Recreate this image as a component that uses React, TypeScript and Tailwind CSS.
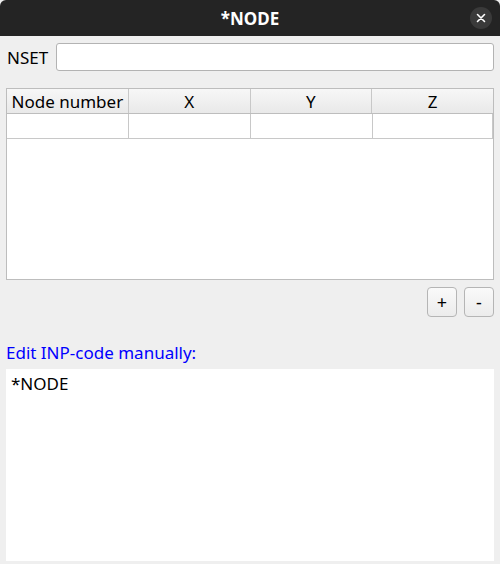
import React from 'react'

const font = { fontFamily: '"Noto Sans", "DejaVu Sans", sans-serif' }

export default function App() {
  const cols = ['Node number', 'X', 'Y', 'Z']

  return (
    <div className="w-[500px] h-[564px] bg-[#efefef] flex flex-col overflow-hidden" style={font}>
      {/* Title bar */}
      <div className="h-[36px] bg-[#242424] rounded-t-[6px] flex items-center justify-center relative shrink-0">
        <span className="text-white font-bold text-[17px] leading-none">*NODE</span>
        <button className="absolute right-[8px] top-[7px] w-[22px] h-[22px] rounded-full bg-[#3a3a3a] flex items-center justify-center">
          <svg width="10" height="10" viewBox="0 0 10 10">
            <path d="M1.5 1.5 L8.5 8.5 M8.5 1.5 L1.5 8.5" stroke="#ffffff" strokeWidth="1.6" strokeLinecap="round" />
          </svg>
        </button>
      </div>

      {/* NSET */}
      <div className="flex items-center gap-[8px] pl-[7px] pr-[6px] pt-[7px]">
        <span className="text-[17px] text-black leading-none">NSET</span>
        <input className="flex-1 h-[28px] bg-white border border-[#b3b3b3] rounded-[3px] outline-none" />
      </div>

      {/* Table */}
      <div className="mx-[6px] mt-[17px] h-[192px] bg-white border border-[#bdbdbd] flex flex-col">
        <div className="flex h-[25px] bg-gradient-to-b from-[#f7f7f7] to-[#e9e9e9] border-b border-[#bdbdbd]">
          {cols.map((c, i) => (
            <div
              key={c}
              className={`flex items-center justify-center text-[17px] text-black leading-none ${i < 3 ? 'w-[122px] border-r border-[#c8c8c8]' : 'w-[121px]'}`}
            >
              {c}
            </div>
          ))}
        </div>
        <div className="flex h-[25px] border-b border-[#c8c8c8] w-[486px]">
          {cols.map((c, i) => (
            <div key={c} className={`border-r border-[#c8c8c8] ${i === 3 ? 'w-[120px]' : 'w-[122px]'}`} />
          ))}
        </div>
      </div>

      {/* +/- buttons */}
      <div className="flex justify-end gap-[7px] pr-[6px] mt-[7px]">
        <button className="w-[30px] h-[30px] rounded-[4px] border border-[#b5b5b5] bg-gradient-to-b from-[#fafafa] to-[#ececec] text-[18px] text-black flex items-center justify-center leading-none">
          +
        </button>
        <button className="w-[30px] h-[30px] rounded-[4px] border border-[#b5b5b5] bg-gradient-to-b from-[#fafafa] to-[#ececec] text-[18px] text-black flex items-center justify-center leading-none">
          -
        </button>
      </div>

      {/* Manual edit */}
      <div className="px-[6px] mt-[27px] text-[17px] text-[#0000ff] leading-none">Edit INP-code manually:</div>
      <div className="mx-[6px] mt-[8px] h-[192px] bg-white px-[5px] pt-[2px]">
        <span className="text-[17px] text-black">*NODE</span>
      </div>
    </div>
  )
}
